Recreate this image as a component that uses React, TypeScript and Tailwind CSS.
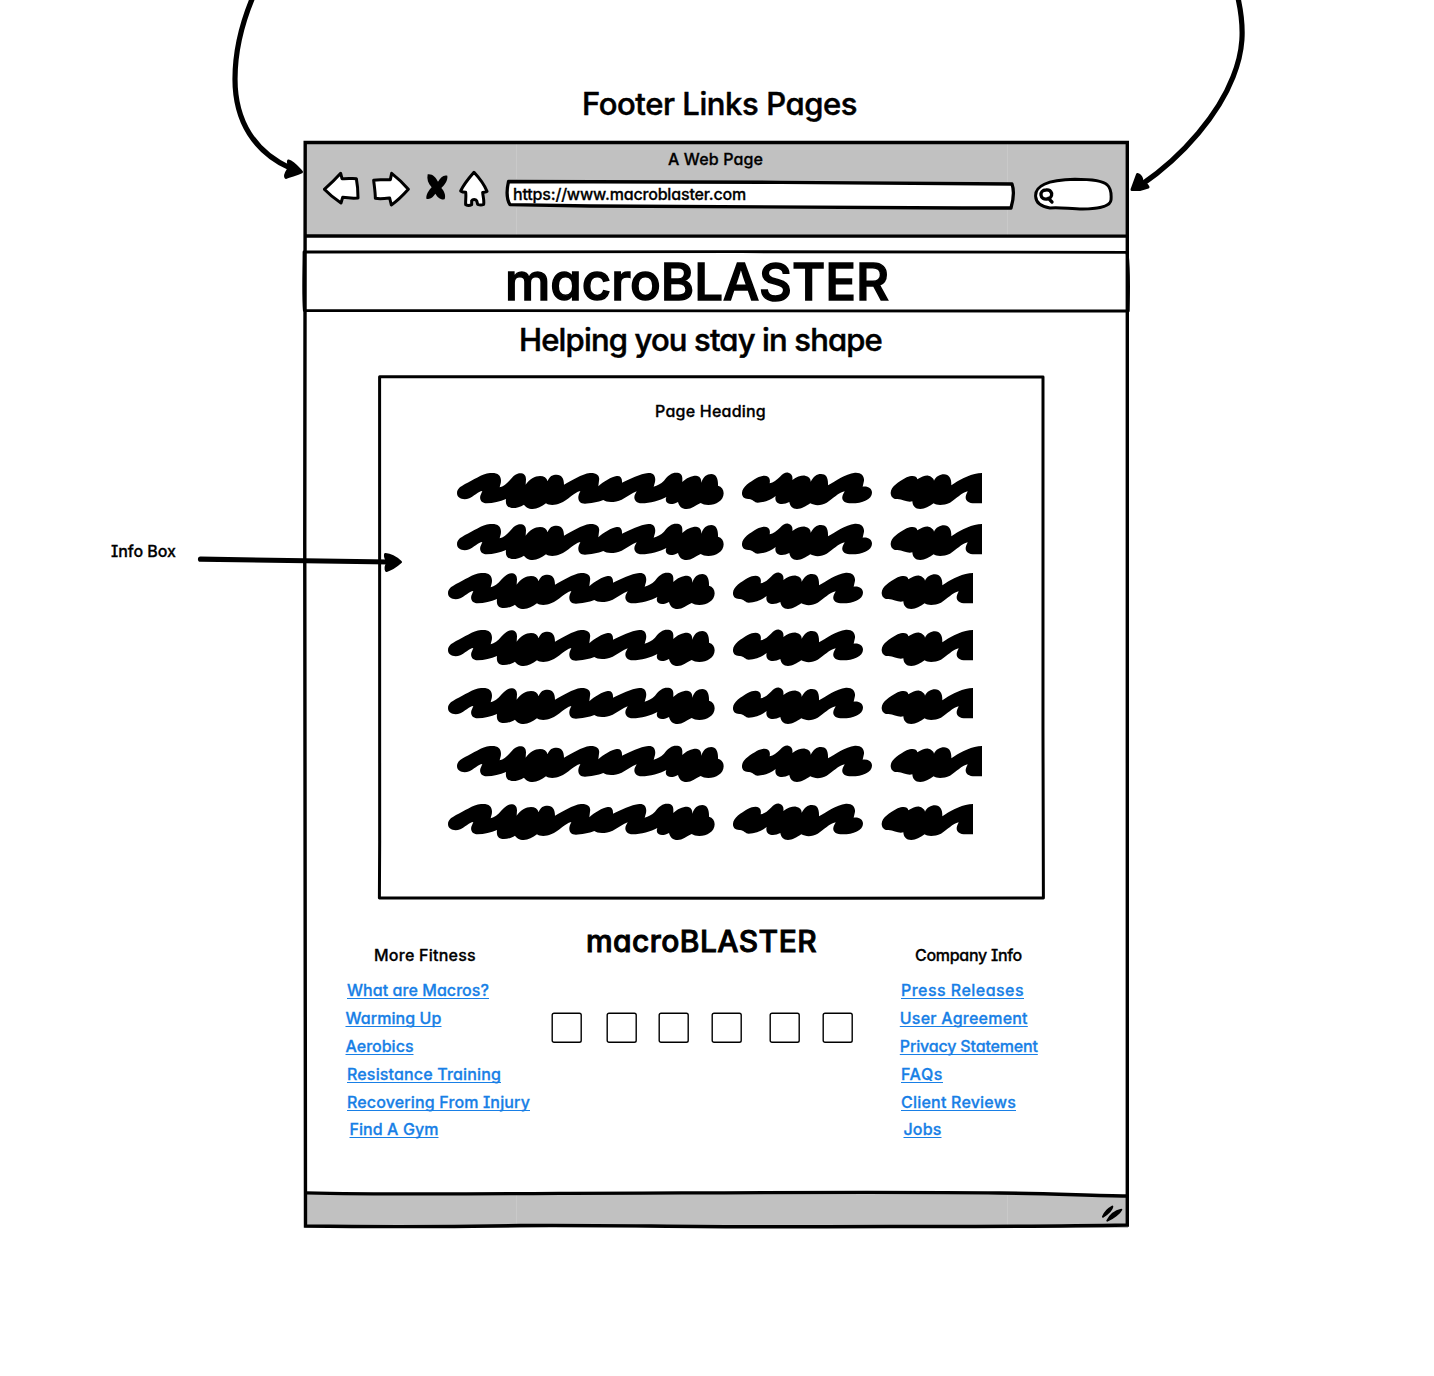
import { useLayoutEffect, useRef, useState } from 'react'
import type { ReactNode } from 'react'

/** One line of text whose tracking is adjusted so that it fills its box. */
function Fit({ text, width, className = '' }: { text: string; width: number; className?: string }) {
  const ref = useRef<HTMLSpanElement>(null)
  const [spacing, setSpacing] = useState(0)
  useLayoutEffect(() => {
    const el = ref.current
    if (!el) return
    el.style.letterSpacing = '0px'
    const natural = el.getBoundingClientRect().width
    const next = (width - natural) / text.length
    el.style.letterSpacing = `${next}px`
    setSpacing(next)
  }, [text, width])
  return (
    <span ref={ref} className={`inline-block whitespace-nowrap ${className}`} style={{ letterSpacing: `${spacing}px` }}>
      {text}
    </span>
  )
}

/** Hand-drawn lines laid over a box; coordinates are canvas pixels. */
function Sketch({ viewBox, children }: { viewBox: string; children: ReactNode }) {
  return (
    <svg
      className="pointer-events-none absolute inset-0 h-full w-full overflow-visible"
      viewBox={viewBox}
      fill="none"
      stroke="#000"
      strokeWidth="3.3"
      strokeLinecap="round"
      strokeLinejoin="round"
    >
      {children}
    </svg>
  )
}

const icon = { fill: '#fff', stroke: '#000', strokeWidth: 9, strokeLinejoin: 'round', strokeLinecap: 'round' } as const

function Toolbar() {
  return (
    <div className="flex items-start">
      <svg className="mt-[2px] ml-[20px] h-[34px] w-[37px]" viewBox="309 513 111 102" {...icon}>
        <path d="M313 568 C328 555 346 538 362 520 L366 536 C382 537 397 534 409 536 C413 556 414 576 414 594 C398 595 382 594 368 592 L363 609 C348 599 330 586 313 568Z" />
      </svg>
      <svg className="mt-[2px] ml-[11px] h-[36px] w-[39px]" viewBox="453 513 117 108" {...icon}>
        <path d="M461 541 C478 537 494 541 511 539 L515 520 C533 534 550 550 565 568 C548 587 532 603 514 615 L509 594 C494 596 480 598 466 595 C466 577 463 559 461 541Z" />
      </svg>
      <svg className="mt-[4px] ml-[15px] h-[27px] w-[23px]" viewBox="615 519 69 81">
        <path d="M623 523 C638 521 647 532 654 545 C662 532 670 524 682 527 C684 542 674 554 664 564 C673 574 678 586 674 598 C661 600 652 591 646 581 C639 592 631 599 619 596 C618 583 626 572 635 562 C624 551 620 538 623 523Z" />
      </svg>
      <svg className="mt-[1px] ml-[11px] h-[37px] w-[30px]" viewBox="717 510 90 111" {...icon}>
        <path d="M762 517 C776 532 791 550 801 574 C798 577 792 576 788 577 C789 590 793 601 791 613 C785 616 778 615 773 613 L770 602 C767 597 758 597 755 602 L755 614 C749 617 741 616 737 614 C736 602 739 590 737 577 C732 577 726 576 722 573 C732 552 747 534 762 517Z" />
      </svg>
      <div className="relative mt-[10px] ml-[16px] h-[31px] w-[510px]">
        <Sketch viewBox="505 179 510 31">
          <path fill="#fff" d="M508.5 181.5 C600 182 880 182 1012 184 C1014.5 191 1013 201 1011 208 C850 208 680 207.5 590 206 L510 204.7 C506 198 507 188 508.5 181.5Z" />
        </Sketch>
        <div className="relative pl-[8px] text-[16px] leading-[30px]">
          <Fit text="https://www.macroblaster.com" width={233} />
        </div>
      </div>
      <div className="relative mt-[8px] ml-[19px] h-[34px] w-[80px]">
        <svg className="h-full w-full" viewBox="402 531 240 102" {...icon}>
          <path d="M407 590 C404 558 440 540 525 538 C575 538 610 543 622 555 C634 566 634 588 633 600 C631 621 585 627 548 627 C510 627 480 621 450 624 C425 620 408 608 407 590Z" />
          <path d="M438 570 C427 570 422 577 423 585 C424 594 432 598 441 597 C450 596 456 589 455 580 C452 572 446 569 438 570Z M445 595 L456 606" strokeWidth="10" />
        </svg>
      </div>
    </div>
  )
}

function ScribbleLine({ className }: { className: string }) {
  return (
    <svg className={`h-[37px] w-[525px] shrink-0 ${className}`} viewBox="51 36 1575 111" fill="#000">
      <path d="M51,100 C51,85 62,80 75,72 C100,60 125,42 150,39 C172,37 183,45 183,62 C183,70 180,76 179,82 C190,80 200,72 212,58 C225,42 235,39 244,40 C255,42 258,50 258,58 L257,74 C268,58 285,48 300,48 C312,48 320,53 323,64 C328,48 338,44 350,44 C365,44 372,55 372,74 C395,62 425,42 450,39 C472,38 480,48 477,62 L475,79 C490,65 515,50 530,48 C542,47 547,54 546,68 C570,58 600,41 625,39 C642,38 648,50 645,66 L641,80 C652,76 662,72 672,62 C685,45 695,38 708,38 C722,38 728,45 727,58 L727,66 C738,54 755,47 768,47 C780,48 784,56 784,68 C790,50 800,42 814,42 C828,42 835,55 834,77 C845,80 851,88 851,100 C851,122 828,135 805,135 C795,135 788,133 782,129 C765,137 755,147 740,147 C725,147 718,140 714,126 C705,132 690,134 684,130 C677,126 676,118 679,111 C660,122 630,130 605,130 C590,130 583,122 583,112 C583,105 588,98 590,94 C575,100 560,112 545,119 C525,128 500,128 490,120 C475,126 450,131 435,131 C420,131 414,122 415,110 C416,102 420,97 421,93 C400,98 385,120 360,130 C345,137 325,136 318,130 C305,140 292,147 278,147 C265,147 256,140 252,134 C240,142 225,145 215,144 C200,142 196,132 198,117 C180,124 160,130 140,130 C125,130 118,120 121,107 L127,93 C115,94 100,110 88,115 C70,122 51,115 51,100Z" />
      <g transform="translate(855 0)">
        <path d="M51,98 C52,80 75,66 95,54 C110,46 122,45 129,50 C136,56 135,64 134,70 C145,68 155,60 165,50 C175,40 182,36 190,38 C200,41 204,48 202,60 C215,50 230,46 240,47 C252,49 258,57 257,66 C265,50 275,42 288,42 C303,42 310,52 309,76 C330,64 360,42 390,38 C410,37 418,48 417,62 L413,80 C430,78 441,86 441,98 C441,118 412,130 380,130 C360,130 350,122 352,110 C353,103 358,98 359,94 C340,98 325,116 305,128 C290,137 270,138 256,130 C240,140 230,147 216,147 C202,147 195,138 193,126 C180,133 165,134 157,128 C151,123 150,115 152,108 C140,118 120,128 98,128 C88,128 84,118 72,117 C58,118 50,110 51,98Z" />
        <path d="M497,98 C498,80 520,66 545,52 C560,46 575,46 577,58 C590,50 600,46 610,47 C620,49 627,57 627,62 C632,50 645,43 657,43 C672,43 680,55 679,76 C700,62 730,44 760,40 L771,39 V130 L750,130 C730,130 721,122 722,110 C723,103 727,98 728,94 C710,98 695,116 675,128 C655,137 635,136 626,130 C612,140 600,147 586,147 C570,147 563,138 562,124 C548,129 535,118 517,117 C505,118 497,110 497,98Z" />
      </g>
    </svg>
  )
}

function InfoBox() {
  return (
    <div className="relative mt-[63px] ml-[75px] flex h-[525px] w-[667px] flex-col">
      <Sketch viewBox="378 375 667 525">
        <path d="M379.6 376.7 C550 376 850 377.5 1043 377 C1044.5 500 1042 720 1043.4 898 C820 899.5 560 896.5 379.4 898 C380.5 720 379 540 379.6 376.7Z" strokeWidth="3" />
      </Sketch>
      <div className="pt-[24px] pl-[277px] text-[16px] leading-[24px]">
        <Fit text="Page Heading" width={111} />
      </div>
      <div className="flex flex-col pt-[48.7px] pl-[70px]">
        <ScribbleLine className="ml-[9px]" />
        <ScribbleLine className="mt-[14.5px] ml-[9px]" />
        <ScribbleLine className="mt-[11.8px]" />
        <ScribbleLine className="mt-[20px]" />
        <ScribbleLine className="mt-[21px]" />
        <ScribbleLine className="mt-[21.2px] ml-[9px]" />
        <ScribbleLine className="mt-[21.3px]" />
      </div>
    </div>
  )
}

const link = 'text-[16px] leading-[28px] text-[#187fe6] underline decoration-[1px] underline-offset-[2px] [text-decoration-skip-ink:none]'

function FooterLinks({ items }: { items: { text: string; width: number; pad: string }[] }) {
  return (
    <ul className="flex flex-col pt-[9px]">
      {items.map((item) => (
        <li key={item.text} className={`h-[27.9px] text-[16px] leading-[28px] ${item.pad}`}>
          <a>
            <Fit text={item.text} width={item.width} className={link} />
          </a>
        </li>
      ))}
    </ul>
  )
}

function IconBox({ className = '' }: { className?: string }) {
  return (
    <svg className={`h-[32px] w-[32px] shrink-0 ${className}`} viewBox="0 0 32 32" fill="#fff" stroke="#000" strokeWidth="1.4">
      <rect x="1.2" y="1.2" width="29" height="29" rx="1.8" />
    </svg>
  )
}

function Footer() {
  return (
    <footer className="flex h-[294px] items-start pt-[43px] pl-[42px]">
      <div className="w-[205px]">
        <div className="pl-[29px] text-[16px] leading-[24px]">
          <Fit text="More Fitness" width={102} />
        </div>
        <FooterLinks
          items={[
            { text: 'What are Macros?', width: 142, pad: 'pl-[2px]' },
            { text: 'Warming Up', width: 96, pad: 'pl-[0.5px]' },
            { text: 'Aerobics', width: 68, pad: 'pl-[0.5px]' },
            { text: 'Resistance Training', width: 154, pad: 'pl-[2px]' },
            { text: 'Recovering From Injury', width: 183, pad: 'pl-[2px]' },
            { text: 'Find A Gym', width: 89, pad: 'pl-[4.5px]' },
          ]}
        />
      </div>
      <div className="-mt-[20px] w-[349px]">
        <div className="h-[36px] pl-[36px] text-[30px] leading-[36px] [-webkit-text-stroke:0.9px_#000]">
          <Fit text="macroBLASTER" width={231} />
        </div>
        <div className="flex pt-[52.6px]">
          <IconBox className="ml-[0.7px]" />
          <IconBox className="ml-[23.8px]" />
          <IconBox className="ml-[19.2px]" />
          <IconBox className="ml-[21px]" />
          <IconBox className="ml-[26.3px]" />
          <IconBox className="ml-[20.7px]" />
        </div>
      </div>
      <div>
        <div className="pl-[16px] text-[16px] leading-[24px]">
          <Fit text="Company Info" width={107} />
        </div>
        <FooterLinks
          items={[
            { text: 'Press Releases', width: 123, pad: 'pl-[2px]' },
            { text: 'User Agreement', width: 128, pad: 'pl-[0.8px]' },
            { text: 'Privacy Statement', width: 138, pad: 'pl-[0.8px]' },
            { text: 'FAQs', width: 42, pad: 'pl-[2px]' },
            { text: 'Client Reviews', width: 115, pad: 'pl-[2px]' },
            { text: 'Jobs', width: 38, pad: 'pl-[4.5px]' },
          ]}
        />
      </div>
    </footer>
  )
}

function BrowserWindow() {
  return (
    <section className="relative flex h-[1087px] w-[826px] flex-col">
      <header className="mr-[1px] ml-[1px] h-[96px] bg-[#c1c1c1]">
        <div className="-ml-px h-[28px] pt-[8px] pl-[365px] text-[16px] leading-[20px]">
          <Fit text="A Web Page" width={95} />
        </div>
        <div className="-ml-px">
          <Toolbar />
        </div>
      </header>
      <div className="relative mt-[14px] h-[61px]">
        <Sketch viewBox="303 251 826 61">
          <path d="M304 252 C500 251 900 252 1127 252.3 C1129.5 270 1128.5 292 1128.3 311 C900 310 520 312 304.3 310.5 C303 292 304 270 304 252Z" strokeWidth="2.8" />
        </Sketch>
        <div className="pl-[202px] text-[51px] leading-[61px] [-webkit-text-stroke:1.5px_#000]">
          <Fit text="macroBLASTER" width={384} />
        </div>
      </div>
      <div className="h-0 pl-[216px] text-[31px] leading-[56px] [-webkit-text-stroke:0.5px_#000]">
        <Fit text="Helping you stay in shape" width={363} />
      </div>
      <InfoBox />
      <Footer />
      <div className="mr-[1px] ml-[2px] flex h-[34px] items-start justify-end bg-[#c1c1c1] [clip-path:polygon(0_0,86%_0,100%_3px,100%_100%,0_100%)]">
        <svg className="mt-[11px] mr-[5px] h-[19px] w-[22px]" viewBox="663 853 66 57" stroke="#000" strokeLinecap="round" strokeLinejoin="round">
          <path d="M669 888 C674 876 684 865 697 858 C696 866 683 879 669 888Z" strokeWidth="6" />
          <path d="M682 900 C690 884 706 871 724 867 C720 876 701 892 682 900Z" strokeWidth="6" />
        </svg>
      </div>
      <Sketch viewBox="303 141 826 1087">
        <path d="M516.5 144 V179 M516.5 208 V235 M1007.5 144 V182 M1007.5 210 V235 M516.5 1195 V1225 M1007.5 1195 V1225" stroke="#cbcbcb" strokeWidth="0.8" strokeLinecap="butt" />
        <path d="M305.2 142.5 H1127.3 C1127.6 500 1126.8 900 1127.3 1225 C1000 1227.5 900 1226 820 1226.7 C700 1227.5 600 1224.5 520 1225.5 C440 1227 380 1227 305.5 1226 C305.5 900 304 500 305.2 142.5Z" strokeLinejoin="miter" strokeWidth="3.4" />
        <path d="M306 236 C500 237.5 800 236 1127 236.2" />
        <path d="M306 1192.8 C370 1194.5 480 1194 560 1193.3 C700 1193 880 1191.5 1000 1193 C1050 1193.5 1090 1195.5 1127 1196" />
      </Sketch>
    </section>
  )
}

/** Arrows that point from the notes outside the window to its parts. */
function Annotations() {
  return (
    <Sketch viewBox="0 0 1434 1376">
      <g strokeWidth="5.2">
        <path d="M252.5 -2 C240 28 235 55 235 79 C235 122 255 152 290 168" />
        <path d="M1238 -2 C1245 30 1243 52 1233 77 C1219 113 1185 155 1141 185" />
        <path d="M200.5 559.2 L390 562" />
      </g>
      <g fill="#000" strokeWidth="3">
        <path d="M288.500 161 C293 162 297 167 301.500 172 C296 174.500 290 175.500 286 177.500 C285 176 286 173 288 170 C290 166 288 163 288.500 161Z" />
        <path d="M1137.500 174.500 L1132 189.500 C1138 190 1143 189 1148 187 C1147 184 1144 184 1142 181 C1142 178 1140 175 1137.500 174.500Z" />
        <path d="M385.500 554.500 C392 555 396 558 400.500 562 C396 566 392 569 386.500 570.500 C385 567 387 565 388 562 C386 559 385 557 385.500 554.500Z" />
      </g>
    </Sketch>
  )
}

export default function App() {
  return (
    <main className="relative h-[1376px] w-[1434px] overflow-hidden bg-white font-['Inter',sans-serif] font-medium text-black [-webkit-text-stroke:0.3px_currentColor] [font-feature-settings:'cv11','cv08']">
      <h1 className="h-[141px] pt-[84px] pl-[582px] text-[31px] leading-[40px] font-medium [-webkit-text-stroke:0.5px_#000]">
        <Fit text="Footer Links Pages" width={275} />
      </h1>
      <div className="flex">
        <aside className="w-[303px] pt-[398px] pl-[111px] text-[16px] leading-[25px]">
          <Fit text="Info Box" width={65} />
        </aside>
        <BrowserWindow />
      </div>
      <Annotations />
    </main>
  )
}
